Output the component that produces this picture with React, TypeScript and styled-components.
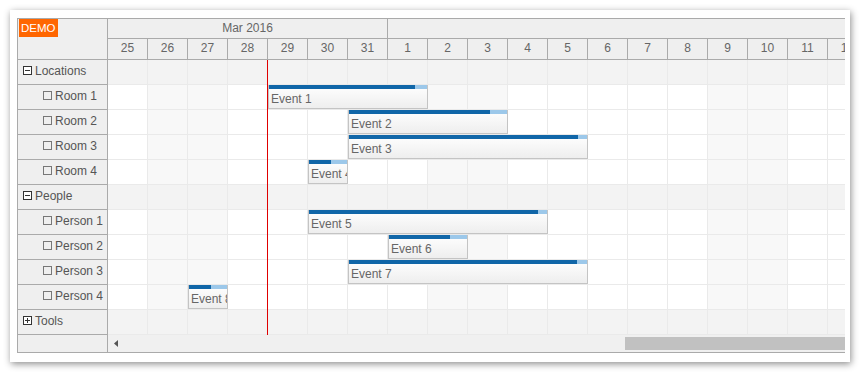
import React from "react";
import styled, { createGlobalStyle } from "styled-components";

const Global = createGlobalStyle`
  html, body { margin: 0; padding: 0; background: #fff; }
  body { font-family: "Liberation Sans", Arial, sans-serif; font-size: 12px; color: #666; }
`;

const BORDER = "#aaaaaa";
const GRID = "#eaeaea";
const CELL = 40;

const Page = styled.div`
  padding: 10px;
`;

const Panel = styled.div`
  width: 840px;
  height: 352px;
  box-sizing: border-box;
  padding: 8px 5px 0 7px;
  background: #fff;
  box-shadow: 1px 2px 7px rgba(0, 0, 0, 0.45);
`;

const Scheduler = styled.div`
  width: 828px;
  box-sizing: border-box;
  border: 1px solid ${BORDER};
  border-right: none;
  display: grid;
  grid-template-columns: 90px minmax(0, 1fr);
  overflow: hidden;
`;

const RowHeaderColumn = styled.div`
  display: flex;
  flex-direction: column;
  box-sizing: border-box;
  border-right: 1px solid ${BORDER};
  background: #efefef;
`;

const Corner = styled.div`
  height: 41px;
  box-sizing: border-box;
  border-bottom: 1px solid ${BORDER};
`;

const Demo = styled.div`
  display: inline-block;
  margin-left: 1px;
  height: 18px;
  line-height: 18px;
  padding: 0 2px;
  background: #ff6600;
  color: #fff;
  font-size: 11.5px;
`;

const RowHeaderCell = styled.div<{ $indent: number }>`
  height: 25px;
  box-sizing: border-box;
  border-bottom: 1px solid ${BORDER};
  display: flex;
  align-items: center;
  gap: 3px;
  padding-left: ${(p) => p.$indent}px;
  padding-bottom: 3px;
  color: #555;
  white-space: nowrap;
`;

const RowHeaderFiller = styled.div`
  flex: 1;
`;

const Main = styled.div`
  min-width: 0;
  overflow: hidden;
  display: flex;
  flex-direction: column;
`;

const MonthRow = styled.div`
  display: flex;
  height: 20px;
  box-sizing: border-box;
  border-bottom: 1px solid ${BORDER};
  background: #efefef;
`;

const MonthCell = styled.div<{ $days: number }>`
  flex: 0 0 ${(p) => p.$days * CELL}px;
  box-sizing: border-box;
  border-right: 1px solid ${BORDER};
  display: flex;
  align-items: center;
  justify-content: center;
  padding-bottom: 2px;
  white-space: nowrap;
`;

const DayRow = styled.div`
  display: flex;
  height: 21px;
  box-sizing: border-box;
  border-bottom: 1px solid ${BORDER};
  background: #efefef;
`;

const DayCell = styled.div`
  flex: 0 0 ${CELL}px;
  box-sizing: border-box;
  border-right: 1px solid ${BORDER};
  display: flex;
  align-items: center;
  justify-content: center;
  padding-bottom: 3px;
`;

const Body = styled.div`
  position: relative;
`;

const GridRow = styled.div`
  position: relative;
  display: flex;
  height: 25px;
  box-sizing: border-box;
  border-bottom: 1px solid ${GRID};
`;

const GridCell = styled.div<{ $bg: string }>`
  flex: 0 0 ${CELL}px;
  box-sizing: border-box;
  border-right: 1px solid ${GRID};
  background: ${(p) => p.$bg};
`;

const EventBox = styled.div`
  position: absolute;
  top: 0;
  height: 24px;
  box-sizing: border-box;
  border: 1px solid #c4c4c4;
  border-top: none;
  background: linear-gradient(to bottom, #ffffff 0%, #eeeeee 100%);
  display: flex;
  flex-direction: column;
  overflow: hidden;
`;

const EventBar = styled.div`
  flex: 0 0 4px;
  margin: 0 -1px;
  background: #9cc8ea;
  display: flex;
`;

const EventProgress = styled.div`
  height: 100%;
  background: #1066a8;
`;

const EventText = styled.div`
  flex: 1;
  display: flex;
  align-items: center;
  padding-left: 2px;
  padding-top: 1px;
  color: #666;
  white-space: nowrap;
`;

const TodayLine = styled.div`
  position: absolute;
  top: 0;
  bottom: 0;
  left: 159px;
  width: 1px;
  background: #e00000;
`;

const ScrollRow = styled.div`
  height: 17px;
  display: flex;
  align-items: center;
  padding-left: 6px;
  background: #f0f0f0;
`;

const Thumb = styled.div`
  margin-left: auto;
  width: 220px;
  height: 13px;
  background: #c1c1c1;
`;

const days = [25, 26, 27, 28, 29, 30, 31, 1, 2, 3, 4, 5, 6, 7, 8, 9, 10, 11, 12];
const weekend = new Set([1, 2, 8, 9, 15, 16]);

type Row = { name: string; group?: "open" | "closed" };
const rows: Row[] = [
  { name: "Locations", group: "open" },
  { name: "Room 1" },
  { name: "Room 2" },
  { name: "Room 3" },
  { name: "Room 4" },
  { name: "People", group: "open" },
  { name: "Person 1" },
  { name: "Person 2" },
  { name: "Person 3" },
  { name: "Person 4" },
  { name: "Tools", group: "closed" },
];

type Ev = { row: number; start: number; len: number; done: number; text: string };
const events: Ev[] = [
  { row: 1, start: 4, len: 4, done: 147, text: "Event 1" },
  { row: 2, start: 6, len: 4, done: 142, text: "Event 2" },
  { row: 3, start: 6, len: 6, done: 230, text: "Event 3" },
  { row: 4, start: 5, len: 1, done: 23, text: "Event 4" },
  { row: 6, start: 5, len: 6, done: 230, text: "Event 5" },
  { row: 7, start: 7, len: 2, done: 62, text: "Event 6" },
  { row: 8, start: 6, len: 6, done: 229, text: "Event 7" },
  { row: 9, start: 2, len: 1, done: 23, text: "Event 8" },
];

const ExpandIcon = ({ open }: { open: boolean }) => (
  <svg width="9" height="9" viewBox="0 0 9 9">
    <rect x="0.5" y="0.5" width="8" height="8" fill="#fff" stroke="#333" />
    <line x1="2" y1="4.5" x2="7" y2="4.5" stroke="#333" />
    {!open && <line x1="4.5" y1="2" x2="4.5" y2="7" stroke="#333" />}
  </svg>
);

const BoxIcon = () => (
  <svg width="9" height="9" viewBox="0 0 9 9">
    <rect x="0.5" y="0.5" width="8" height="8" fill="none" stroke="#777" />
  </svg>
);

const LeftArrow = () => (
  <svg width="4" height="7" viewBox="0 0 4 7">
    <polygon points="4,0 4,7 0,3.5" fill="#555" />
  </svg>
);

export default function App() {
  return (
    <>
      <Global />
      <Page>
        <Panel>
          <Scheduler>
            <RowHeaderColumn>
              <Corner>
                <Demo>DEMO</Demo>
              </Corner>
              {rows.map((r) => (
                <RowHeaderCell key={r.name} $indent={r.group ? 5 : 25}>
                  {r.group ? <ExpandIcon open={r.group === "open"} /> : <BoxIcon />}
                  <span>{r.name}</span>
                </RowHeaderCell>
              ))}
              <RowHeaderFiller />
            </RowHeaderColumn>
            <Main>
              <MonthRow>
                <MonthCell $days={7}>Mar 2016</MonthCell>
                <MonthCell $days={30}></MonthCell>
              </MonthRow>
              <DayRow>
                {days.map((d, i) => (
                  <DayCell key={i}>{d}</DayCell>
                ))}
              </DayRow>
              <Body>
                {rows.map((r, ri) => (
                  <GridRow key={r.name}>
                    {days.map((_, i) => (
                      <GridCell
                        key={i}
                        $bg={r.group ? "#f3f3f3" : weekend.has(i) ? "#f8f8f8" : "#ffffff"}
                      />
                    ))}
                    {events
                      .filter((e) => e.row === ri)
                      .map((e) => (
                        <EventBox
                          key={e.text}
                          style={{ left: e.start * CELL, width: e.len * CELL }}
                        >
                          <EventBar>
                            <EventProgress style={{ width: e.done }} />
                          </EventBar>
                          <EventText>{e.text}</EventText>
                        </EventBox>
                      ))}
                  </GridRow>
                ))}
                <TodayLine />
              </Body>
              <ScrollRow>
                <LeftArrow />
                <Thumb />
              </ScrollRow>
            </Main>
          </Scheduler>
        </Panel>
      </Page>
    </>
  );
}
